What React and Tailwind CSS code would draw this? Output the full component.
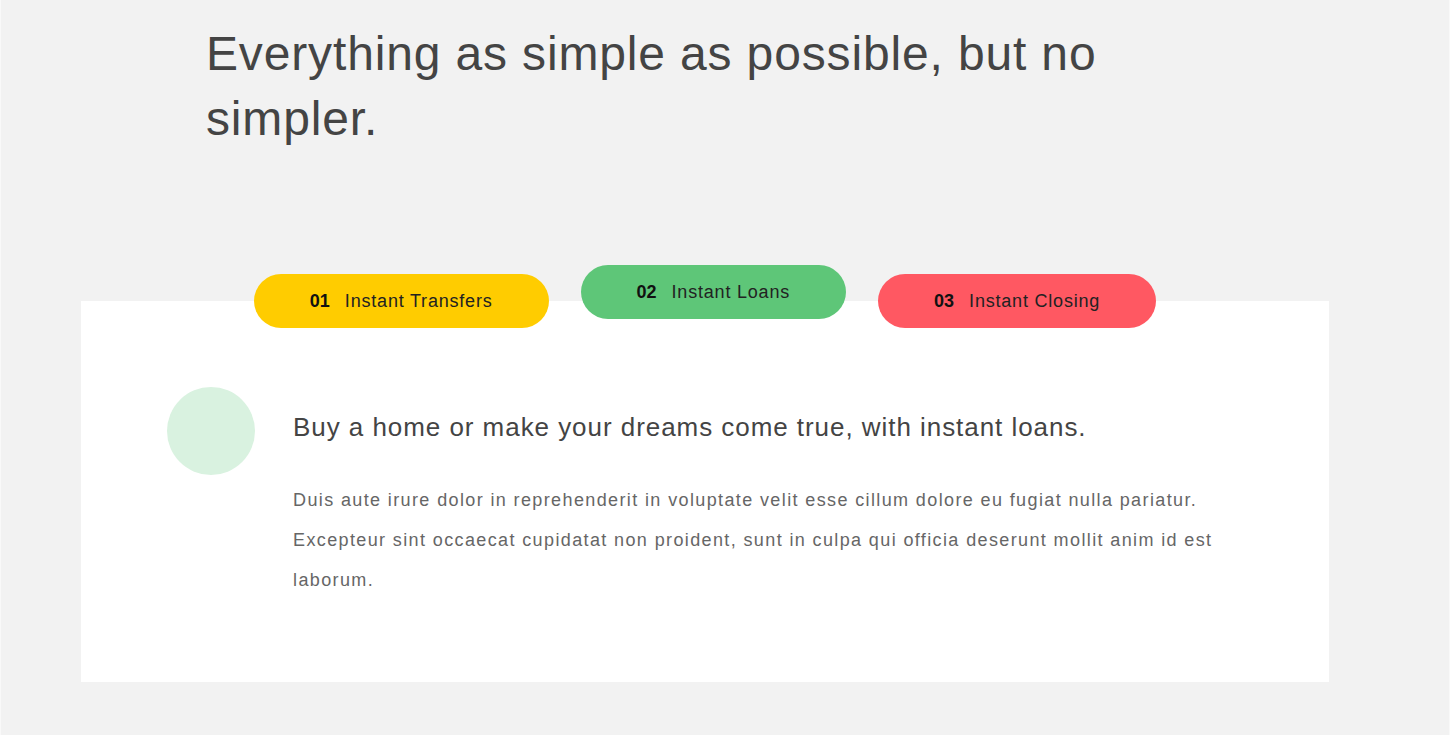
import React from 'react';

const tabs = [
  { num: '01', label: 'Instant Transfers', color: 'bg-[#ffcc00]', active: false },
  { num: '02', label: 'Instant Loans', color: 'bg-[#5ec678]', active: true },
  { num: '03', label: 'Instant Closing', color: 'bg-[#ff5862]', active: false },
];

function Tab({ tab }) {
  return (
    <button
      className={`flex h-[54px] items-center gap-[15px] rounded-full px-14 text-[18px] ${tab.color} ${tab.active ? '-mt-[9px]' : ''}`}
    >
      <span className="font-bold text-[#111]">{tab.num}</span>
      <span className="tracking-[0.8px] text-[#222]">{tab.label}</span>
    </button>
  );
}

export default function App() {
  return (
    <div
      className="min-h-screen border-x border-[#f9f9f9] bg-[#f2f2f2] pb-[53px]"
      style={{ fontFamily: '"Liberation Sans", Arial, sans-serif' }}
    >
      <div className="pl-[205px] pt-[21px]">
        <h1 className="w-[960px] text-[48px] leading-[65px] tracking-[0.85px] text-[#444]">
          Everything as simple as possible, but no simpler.
        </h1>
      </div>

      <section className="flow-root ml-[80px] mt-[150px] w-[1248px] bg-white pb-[82px]">
        <div className="-mt-[27px] flex items-start justify-center gap-8">
          {tabs.map((t) => (
            <Tab key={t.num} tab={t} />
          ))}
        </div>

        <div className="mt-[59px] flex pl-[86px]">
          <div className="h-[88px] w-[88px] shrink-0 rounded-full bg-[#d9f2e0]" />
          <div className="ml-[38px] mt-[25px] w-[936px]">
            <h2 className="text-[26px] leading-[30px] tracking-[0.95px] text-[#444]">
              Buy a home or make your dreams come true, with instant loans.
            </h2>
            <p className="mt-[38px] text-[18px] leading-[40px] tracking-[1.38px] text-[#666]">
              Duis aute irure dolor in reprehenderit in voluptate velit esse cillum dolore eu fugiat nulla pariatur.
              Excepteur sint occaecat cupidatat non proident, sunt in culpa qui officia deserunt mollit anim id est
              laborum.
            </p>
          </div>
        </div>
      </section>
    </div>
  );
}
